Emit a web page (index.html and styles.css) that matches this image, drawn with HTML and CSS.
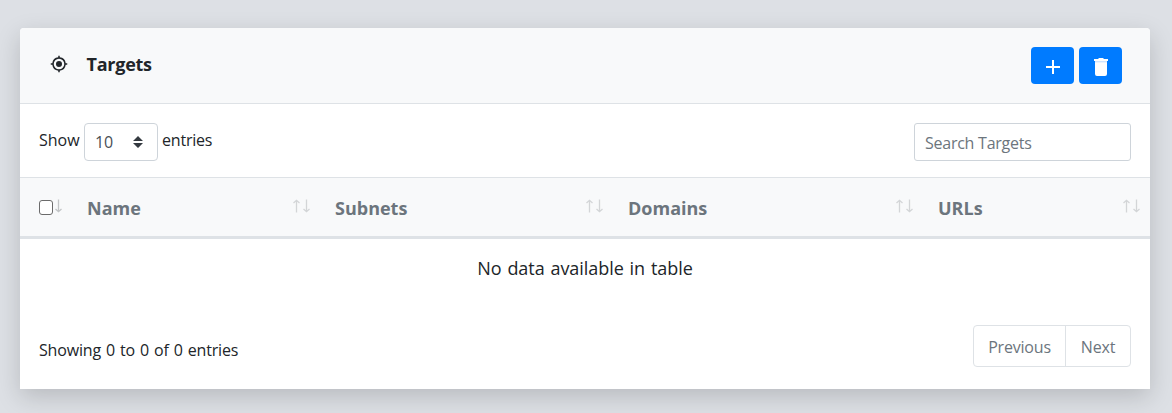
FILE: index.html
```html
<!DOCTYPE html>
<html lang="en">
<head>
<meta charset="utf-8">
<title>Targets</title>
<link rel="stylesheet" href="styles.css">
</head>
<body>
<svg width="0" height="0" class="defs">
  <symbol id="arrow-up" viewBox="0 0 7 14"><path d="M3.5 13.5V1.5M.5 4l3-2.7 3 2.7"/></symbol>
  <symbol id="arrow-down" viewBox="0 0 7 14"><path d="M3.5 .5v12M.5 10l3 2.7 3-2.7"/></symbol>
</svg>
<main class="card">
  <header class="card-header">
    <svg class="target" viewBox="0 0 24 24"><path fill="currentColor" d="M12 8a4 4 0 1 0 0 8 4 4 0 0 0 0-8zm8.94 3A8.99 8.99 0 0 0 13 3.06V1h-2v2.06A8.99 8.99 0 0 0 3.06 11H1v2h2.06A8.99 8.99 0 0 0 11 20.94V23h2v-2.06A8.99 8.99 0 0 0 20.94 13H23v-2h-2.06zM12 19a7 7 0 1 1 0-14 7 7 0 0 1 0 14z"/></svg>
    <h1 class="title">Targets</h1>
    <div class="actions">
      <button class="btn" aria-label="Add"><svg class="plus" viewBox="0 0 14 14"><path d="M7 0v14M0 7h14" stroke="#fff" stroke-width="2"/></svg></button>
      <button class="btn" aria-label="Delete"><svg class="trash" viewBox="0 0 14 18"><path fill="#fff" d="M1 4h12v12a2 2 0 0 1-2 2H3a2 2 0 0 1-2-2zM0 1h4l1-1h4l1 1h4v2H0z"/><path fill="#cfe4ff" d="M1 3h12v1.4H1z"/></svg></button>
    </div>
  </header>
  <section class="controls">
    <div class="length"><span class="show">Show</span>
      <span class="select"><span>10</span><svg viewBox="0 0 10 12"><path fill="#343a40" d="M0 5 5 0l5 5zM0 7l5 5 5-5z"/></svg></span>
      <span class="entries">entries</span></div>
    <input class="search" type="text" placeholder="Search Targets">
  </section>
  <table class="grid">
    <colgroup><col class="c-check"><col class="c-name"><col class="c-subnets"><col class="c-domains"><col></colgroup>
    <thead><tr>
      <th class="check"><div class="head"><span class="box"></span><span class="sort"><svg class="down"><use href="#arrow-down"/></svg></span></div></th>
      <th><div class="head"><span>Name</span><span class="sort"><svg><use href="#arrow-up"/></svg><svg class="down"><use href="#arrow-down"/></svg></span></div></th>
      <th><div class="head"><span>Subnets</span><span class="sort"><svg><use href="#arrow-up"/></svg><svg class="down"><use href="#arrow-down"/></svg></span></div></th>
      <th><div class="head"><span>Domains</span><span class="sort"><svg><use href="#arrow-up"/></svg><svg class="down"><use href="#arrow-down"/></svg></span></div></th>
      <th><div class="head"><span>URLs</span><span class="sort"><svg><use href="#arrow-up"/></svg><svg class="down"><use href="#arrow-down"/></svg></span></div></th>
    </tr></thead>
    <tbody><tr><td colspan="5"><span class="empty">No data available in table</span></td></tr></tbody>
  </table>
  <footer class="footer">
    <div class="info">Showing 0 to 0 of 0 entries</div>
    <nav class="pages"><span class="page prev">Previous</span><span class="page next">Next</span></nav>
  </footer>
</main>
</body>
</html>
```
FILE: styles.css
```css
* { box-sizing: border-box; }
body {
  margin: 0;
  height: 413px;
  padding: 28px 22px 24px 20px;
  overflow: hidden;
  background: #dde0e5;
  color: #212529;
  font: 16px/24px "Segoe UI", "Open Sans", "Noto Sans", sans-serif;
  letter-spacing: -0.2px;
}
.defs { display: block; height: 0; }
.card {
  height: 361px;
  background: #fff;
  border-radius: 4px 4px 0 0;
  box-shadow: 0 8px 24px rgba(0, 0, 0, .17);
}
.card-header {
  display: flex;
  align-items: center;
  height: 76px;
  padding: 0 28px 0 29.5px;
  background: #f8f9fa;
  border-bottom: 1px solid #dee2e6;
  border-radius: 4px 4px 0 0;
}
.target { width: 18px; height: 18px; margin-bottom: 4px; }
.title { margin: 0 0 3px 19px; font-size: 18px; line-height: 24px; font-weight: 700; letter-spacing: -.25px; }
.actions { display: flex; gap: 5px; margin-left: auto; }
.btn {
  display: flex;
  align-items: center;
  justify-content: center;
  width: 43px;
  height: 37px;
  padding: 2px 0 0 1px;
  border: 0;
  border-radius: 4px;
  background: #007bff;
}
.plus { width: 14px; height: 14px; margin-top: 1px; }
.trash { width: 14px; height: 18px; }
.controls {
  display: flex;
  justify-content: space-between;
  height: 73px;
  padding: 19px 19px 0 19px;
}
.length { display: flex; height: 38px; }
.show { width: 45px; padding-top: 5px; letter-spacing: 0; }
.entries { padding: 5px 0 0 4px; letter-spacing: -.2px; }
.select {
  display: flex;
  align-items: center;
  justify-content: space-between;
  width: 74px;
  height: 38px;
  padding: 0 14px 0 10px;
  border: 1px solid #ced4da;
  border-radius: 4px;
  color: #495057;
}
.select svg { width: 10px; height: 12px; }
.search {
  width: 217px;
  height: 38px;
  padding: 2px 10px 0;
  border: 1px solid #ced4da;
  border-radius: 3px;
  font: inherit;
  letter-spacing: -.25px;
}
.search::placeholder { color: #6c757d; opacity: 1; }
.grid { width: 100%; table-layout: fixed; border-collapse: separate; border-spacing: 0; }
.c-check { width: 52px; }
.c-name { width: 248px; }
.c-subnets { width: 293px; }
.c-domains { width: 310px; }
th {
  height: 62px;
  padding: 0 10px 0 15px;
  border-top: 1px solid #dee2e6;
  border-bottom: 3px solid #dee2e6;
  background: #f8f9fa;
  color: #6c757d;
  font-size: 18px;
  font-weight: 700;
  letter-spacing: 0;
  text-align: left;
}
.check { padding-left: 19px; }
.head { display: flex; align-items: center; justify-content: space-between; padding-top: 1px; }
.box { width: 14px; height: 15px; margin-top: -1px; border: 1px solid #6b6b6b; border-radius: 3px; background: #fff; }
.sort { display: flex; gap: 3px; margin-top: -4px; }
.sort svg { width: 7px; height: 14px; fill: none; stroke: #d3d5d7; stroke-width: 1.3; }
.check .sort svg { stroke: #c3c5c7; }
td { height: 60px; padding: 0 0 2px; text-align: center; font-size: 18px; letter-spacing: -.05px; word-spacing: 1.2px; }
.footer {
  display: flex;
  justify-content: space-between;
  padding: 26px 19px 0;
}
.info { padding-top: 13px; letter-spacing: -.16px; word-spacing: 1px; }
.pages { display: flex; height: 42px; color: #6c757d; border: 1px solid #dee2e6; border-radius: 4px; }
.page { display: flex; align-items: center; justify-content: center; padding-top: 2px; }
.prev { width: 92px; border-right: 1px solid #dee2e6; }
.next { width: 64px; }
```
